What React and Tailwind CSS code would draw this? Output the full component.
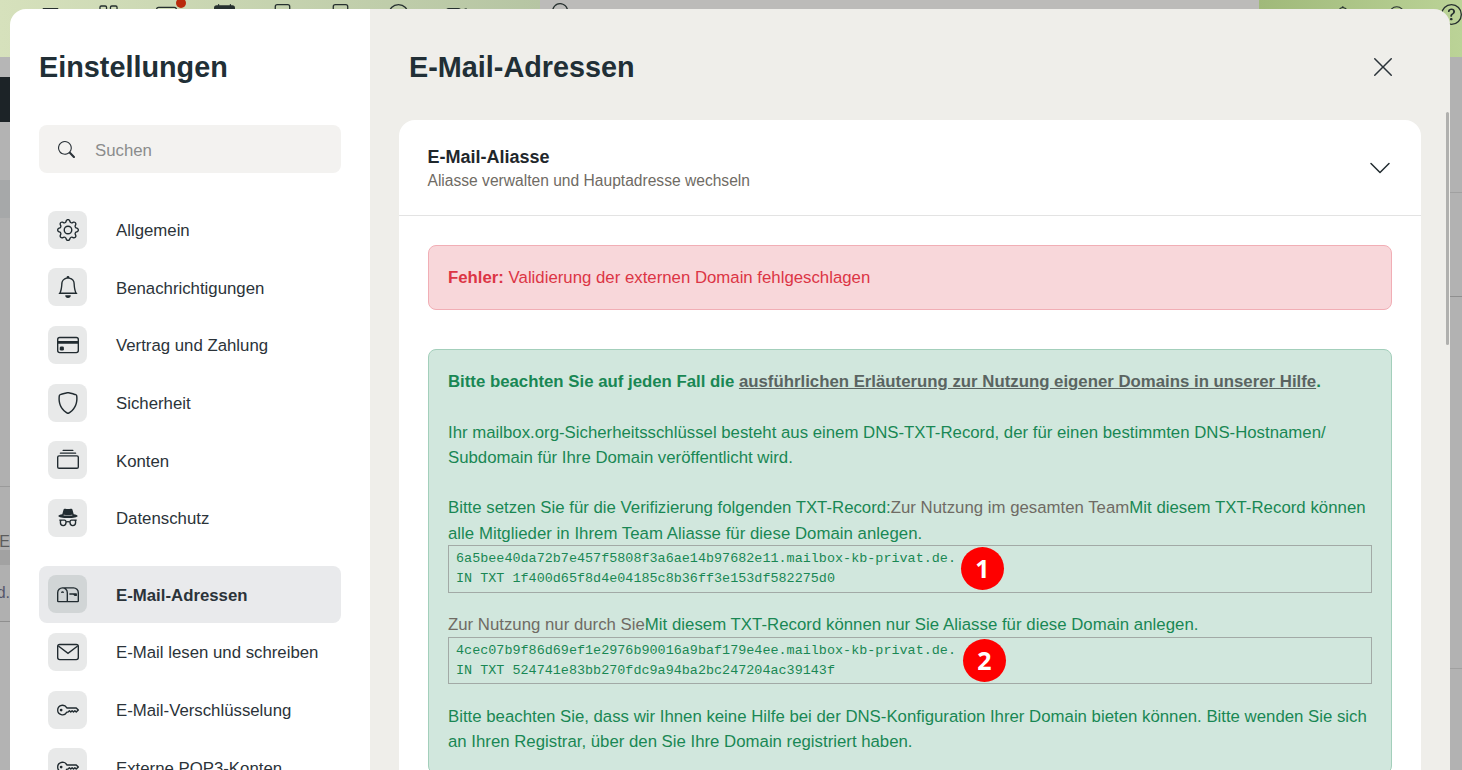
import {
  BsBell, BsCalendarFill, BsChevronDown, BsCircle, BsCollection, BsCreditCard, BsCameraVideo, BsFileText, BsGear,
  BsGrid, BsIncognito, BsJustify, BsKey, BsMailbox, BsEnvelope, BsQuestionCircle, BsSearch, BsShield, BsTablet, BsXLg,
} from 'react-icons/bs'

// Umschlag ohne untere Diagonalen, wie in der Vorlage
function BriefIcon({ size, className }) {
  return (
    <svg width={size} height={size} viewBox="0 0 16 16" fill="none" stroke="currentColor" strokeWidth="1" className={className}>
      <rect x="0.5" y="2.5" width="15" height="11" rx="1.5" />
      <path d="M1 3.6 8 9l7-5.4" />
    </svg>
  )
}

const gruppen = [
  [
    { label: 'Allgemein', icon: BsGear },
    { label: 'Benachrichtigungen', icon: BsBell },
    { label: 'Vertrag und Zahlung', icon: BsCreditCard },
    { label: 'Sicherheit', icon: BsShield },
    { label: 'Konten', icon: BsCollection },
    { label: 'Datenschutz', icon: BsIncognito },
  ],
  [
    { label: 'E-Mail-Adressen', icon: BsMailbox, aktiv: true },
    { label: 'E-Mail lesen und schreiben', icon: BriefIcon },
    { label: 'E-Mail-Verschlüsselung', icon: BsKey },
    { label: 'Externe POP3-Konten', icon: BsKey },
  ],
]

const topIcons = [BsJustify, BsGrid, BsEnvelope, BsCalendarFill, BsTablet, BsFileText, BsCircle, BsCameraVideo]

function Hintergrund() {
  return (
    <div className="flex h-full flex-col bg-[#b3b3b3] text-[#26302f]">
      <div className="flex h-[57px] shrink-0">
        <div className="flex w-[540px] gap-[37px] bg-gradient-to-r from-[#d6e1bc] to-[#b6c5a3] pl-[40px] pt-[4px]">
          {topIcons.map((Icon, i) => (
            <div key={i} className="relative h-[21px] w-[21px]">
              <Icon size={21} />
              {i === 2 && <span className="absolute -right-[9px] -top-[6px] h-[10px] w-[10px] rounded-full bg-[#b92a0c]" />}
            </div>
          ))}
        </div>
        <div className="flex-1 bg-[#bcbbb9] pl-[12px] pt-[3px]">
          <BsSearch size={20} />
        </div>
        <div className="relative flex w-[203px] gap-[38px] bg-gradient-to-r from-[#a0b97a] to-[#bbd397] pl-[76px] pt-[4px]">
          <BsBell size={20} />
          <BsCircle size={20} />
          <BsQuestionCircle size={21} className="ml-[-1px] shrink-0" />
        </div>
      </div>
      <div className="flex flex-1">
        <div className="flex w-[10px] flex-col overflow-hidden">
          <div className="h-[20px] bg-[#b6b6b6]" />
          <div className="h-[45px] bg-[#1c2327]" />
          <div className="h-[58px] bg-[#b3b3b3]" />
          <div className="h-[38px] bg-[#a6a8a9]" />
          <div className="h-[269px] border-b border-[#9a9a9a] bg-[#b0b0b0]" />
          <div className="flex h-[63px] items-end justify-end bg-[#b0b0b0] text-[16px] leading-[16px] text-[#5c5c5c]">
            <span className="whitespace-nowrap">kE</span>
          </div>
          <div className="h-[15px] bg-[#a2a2a2]" />
          <div className="flex h-[57px] items-center justify-end border-b border-[#8f8f8f] bg-[#b0b0b0] text-[16px] text-[#55566a]">
            <span>d.</span>
          </div>
          <div className="flex-1 bg-[#b3b3b3]" />
        </div>
        <div className="flex flex-1 flex-col bg-[#b2b2b2]">
          <div className="h-[136px] border-b border-[#a0a0a0]" />
          <div className="h-[104px] border-b border-[#8f8f8f]" />
          <div className="h-[372px] border-b border-[#a0a0a0]" />
        </div>
      </div>
    </div>
  )
}

function NavZeile({ item }) {
  const Icon = item.icon
  return (
    <div className={`flex h-[57.6px] items-center rounded-lg pl-[9px] ${item.aktiv ? 'bg-[#e9eaec] font-bold' : ''}`}>
      <div className={`flex h-[38px] w-[39px] items-center justify-center rounded-lg ${item.aktiv ? 'bg-[#d1d5d6]' : 'bg-[#e8e9e9]'}`}>
        <Icon size={22} className="text-[#212b30]" />
      </div>
      <span className="ml-[29px] pt-[2.2px] text-[#2b3339]">{item.label}</span>
    </div>
  )
}

function TxtRecord({ zeile1, zeile2, nummer, className, kreisClass }) {
  return (
    <div className={`relative ${className}`}>
      <pre className="border border-[#a2aaa6] px-[7px] py-[2.4px] font-['Liberation_Mono',monospace] text-[13.44px] leading-[20.16px] text-[#198754]">
        {zeile1}
        {'\n'}
        {zeile2}
      </pre>
      <div className={`absolute flex h-[43px] w-[43px] items-center justify-center rounded-full bg-[#fe0000] font-['Noto_Sans',sans-serif] text-[25px] font-bold text-white ${kreisClass}`}>
        {nummer}
      </div>
    </div>
  )
}

export default function App() {
  return (
    <div className="relative h-screen w-full overflow-hidden font-['Liberation_Sans',sans-serif] text-[16.8px] leading-[25.2px]">
      <Hintergrund />

      <div className="absolute bottom-0 left-[10px] top-[9px] flex w-[1440px] overflow-hidden rounded-t-[16px]">
        <aside className="w-[360px] shrink-0 overflow-hidden bg-white px-[29px] pt-[38px]">
          <h1 className="text-[28.8px] font-bold leading-[40px] text-[#212f36]">Einstellungen</h1>
          <div className="mt-[38px] flex h-[48px] items-center rounded-lg bg-[#f3f2f0] pl-[19px]">
            <BsSearch size={17} className="text-[#2b3339]" />
            <span className="ml-[20px] mt-[4px] text-[#8b8c8c]">Suchen</span>
          </div>
          <div className="mt-[28px] flex flex-col gap-[19px]">
            {gruppen.map((gruppe, i) => (
              <div key={i}>
                {gruppe.map(item => <NavZeile key={item.label} item={item} />)}
              </div>
            ))}
          </div>
        </aside>

        <main className="relative min-w-0 flex-1 overflow-hidden bg-[#efeeea] px-[29px]">
          <div className="flex h-[111px] items-start justify-between pl-[10px] pr-[26px] pt-[38px]">
            <h2 className="text-[28.8px] font-bold leading-[40px] text-[#212f36]">E-Mail-Adressen</h2>
            <BsXLg size={24} className="mt-[8px] text-[#2b3339]" />
          </div>

          <div className="rounded-t-[16px] bg-white">
            <div className="flex h-[96px] items-center justify-between border-b border-[#e3e3e3] pl-[28.5px] pr-[29px]">
              <div className="pt-[2px]">
                <div className="text-[18px] font-bold leading-[24px] text-[#1f272c]">E-Mail-Aliasse</div>
                <div className="text-[15.6px] leading-[24px] text-[#6f6b64]">Aliasse verwalten und Hauptadresse wechseln</div>
              </div>
              <BsChevronDown size={24} className="mt-[1px] text-[#212b30]" />
            </div>

            <div className="px-[29px] pt-[29px]">
              <div className="rounded-lg border border-[#f1aeb5] bg-[#f8d7da] p-[19px] text-[#dc3545]">
                <b>Fehler:</b> Validierung der externen Domain fehlgeschlagen
              </div>

              <div className="mt-[39px] rounded-lg border border-[#a3cfbb] bg-[#d1e7dd] p-[19px] text-[#198754]">
                <p className="mb-[25.5px] font-bold">
                  Bitte beachten Sie auf jeden Fall die{' '}
                  <a className="text-[#5a6461] underline">ausführlichen Erläuterung zur Nutzung eigener Domains in unserer Hilfe</a>.
                </p>
                <p className="mb-[25px]">
                  Ihr mailbox.org-Sicherheitsschlüssel besteht aus einem DNS-TXT-Record, der für einen bestimmten DNS-Hostnamen/
                  Subdomain für Ihre Domain veröffentlicht wird.
                </p>
                <p className="mb-[0.2px]">
                  Bitte setzen Sie für die Verifizierung folgenden TXT-Record:<span className="text-[#6f6b64]">Zur Nutzung im gesamten Team</span><span className="tracking-[0.025px]">Mit diesem TXT-Record können alle Mitglieder in Ihrem Team Aliasse für diese Domain anlegen.</span>
                </p>
                <TxtRecord
                  zeile1="6a5bee40da72b7e457f5808f3a6ae14b97682e11.mailbox-kb-privat.de."
                  zeile2="IN TXT 1f400d65f8d4e04185c8b36ff3e153df582275d0"
                  nummer="1"
                  className="-mt-[0.5px]"
                  kreisClass="left-[513px] top-[2px]"
                />
                <p className="mt-[19.6px]">
                  <span className="text-[#6f6b64]">Zur Nutzung nur durch Sie</span><span className="tracking-[0.025px]">Mit diesem TXT-Record können nur Sie Aliasse für diese Domain anlegen.</span>
                </p>
                <TxtRecord
                  zeile1="4cec07b9f86d69ef1e2976b90016a9baf179e4ee.mailbox-kb-privat.de."
                  zeile2="IN TXT 524741e83bb270fdc9a94ba2bc247204ac39143f"
                  nummer="2"
                  className="mt-0"
                  kreisClass="left-[515px] top-[2px]"
                />
                <p className="mt-[19.6px]">
                  Bitte beachten Sie, dass wir Ihnen keine Hilfe bei der DNS-Konfiguration Ihrer Domain bieten können. Bitte wenden Sie sich an Ihren Registrar, über den Sie Ihre Domain registriert haben.
                </p>
              </div>
            </div>
          </div>

          <div className="absolute right-[1px] top-[103px] h-[233px] w-[3px] rounded-full bg-[#b0b0ae]" />
        </main>
      </div>
    </div>
  )
}
